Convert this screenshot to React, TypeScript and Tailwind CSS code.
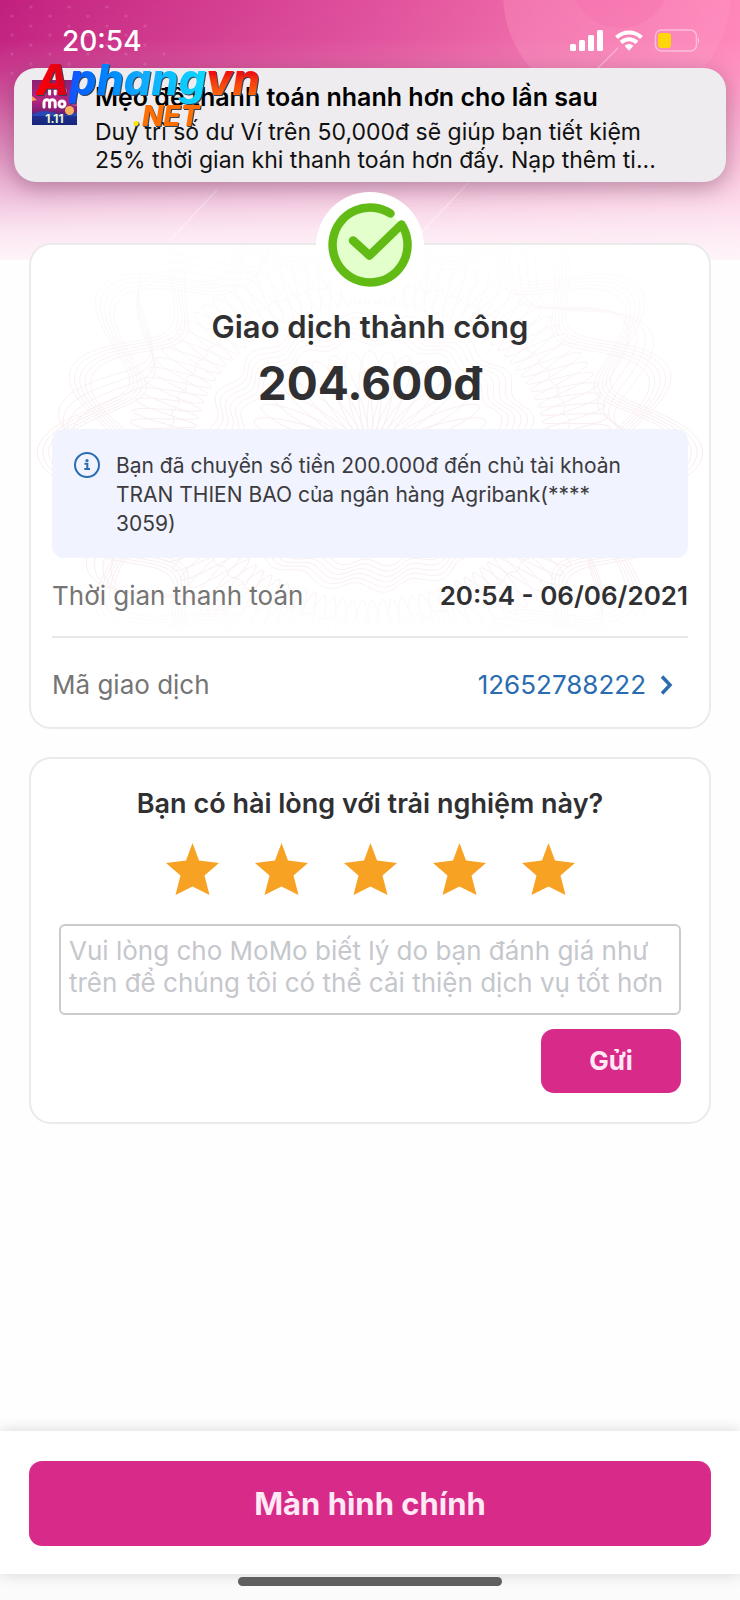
import React, { useState } from "react";

type Point = [number, number];

function toPath(points: Point[]): string {
  return "M" + points.map(([x, y]) => `${x.toFixed(1)} ${y.toFixed(1)}`).join("L") + "Z";
}

/** Closed wavy ring around the centre of the guilloche pattern. */
function ring(rx: number, ry: number, waves: number, depth: number, phase: number): string {
  const points: Point[] = [];
  for (let i = 0; i < 480; i++) {
    const t = (i / 480) * Math.PI * 2;
    const k = 1 + depth * Math.sin(waves * t + phase);
    points.push([340 + rx * k * Math.cos(t), 208 + ry * k * Math.sin(t)]);
  }
  return toPath(points);
}

const GUILLOCHE: string[] = [
  ...Array.from({ length: 5 }, (_, i) => ring(294 - i * 5, 250 - i * 5, 10, 0.135, Math.PI / 2)),
  ...Array.from({ length: 5 }, (_, i) => ring(282 - i * 5, 240 - i * 5, 10, 0.12, -Math.PI / 2)),
  ...Array.from({ length: 4 }, (_, i) => ring(282 - i * 5, 240 - i * 5, 10, 0.12, i * 0.25)),
  ...Array.from({ length: 3 }, (_, i) => ring(210, 176, 38, 0.16, i * 2.09)),
  ring(202, 170, 60, 0.01, 0),
  ...Array.from({ length: 6 }, (_, i) => ring(164 - i * 6, 136 - i * 5, 18, 0.035, i * 0.2)),
  ...Array.from({ length: 4 }, (_, i) => ring(72, 60, 10, 0.7, i * 1.57)),
];

function Guilloche() {
  return (
    <svg
      aria-hidden="true"
      viewBox="0 0 680 390"
      className="pointer-events-none absolute inset-x-0 top-0 w-full"
    >
      <defs>
        <linearGradient id="guillocheFade" x1="0" y1="0" x2="0" y2="1">
          <stop offset="0" stopColor="#fff" stopOpacity="0.1" />
          <stop offset="0.5" stopColor="#fff" stopOpacity="1" />
          <stop offset="0.85" stopColor="#fff" stopOpacity="0.9" />
          <stop offset="1" stopColor="#fff" stopOpacity="0" />
        </linearGradient>
        <mask id="guillocheMask">
          <rect width="680" height="390" fill="url(#guillocheFade)" />
        </mask>
      </defs>
      <g mask="url(#guillocheMask)" fill="none" stroke="#f8ecee" strokeWidth="1">
        {GUILLOCHE.map((d, i) => (
          <path key={i} d={d} />
        ))}
      </g>
    </svg>
  );
}

function HeroBackground() {
  return (
    <div
      aria-hidden="true"
      className="absolute inset-x-0 top-0 h-[260px] overflow-hidden bg-linear-to-r from-[#c21f7f] via-[#e0509c] to-[#ff86b8]"
    >
      <svg viewBox="0 0 740 260" preserveAspectRatio="none" className="size-full">
        <defs>
          <linearGradient id="heroFade" x1="0" y1="0" x2="0" y2="1">
            <stop offset="0" stopColor="#fff" stopOpacity="0" />
            <stop offset="0.15" stopColor="#fff" stopOpacity="0.02" />
            <stop offset="0.27" stopColor="#f6e4f0" stopOpacity="0.14" />
            <stop offset="0.68" stopColor="#fbeaf4" stopOpacity="0.7" />
            <stop offset="0.88" stopColor="#fdeef6" stopOpacity="0.95" />
            <stop offset="1" stopColor="#fff5fa" stopOpacity="1" />
          </linearGradient>
          <pattern id="heroDots" width="38" height="19" patternUnits="userSpaceOnUse">
            <circle cx="12" cy="16" r="1.6" fill="#fff" fillOpacity="0.13" />
            <circle cx="31" cy="7" r="1.6" fill="#fff" fillOpacity="0.13" />
          </pattern>
        </defs>
        <path d="M0 0H130L175 60V80H0Z" fill="url(#heroDots)" />
        <circle cx="617" cy="-6" r="114" fill="#ff9cc8" fillOpacity="0.3" />
        <circle cx="620" cy="-22" r="50" fill="#f46aac" fillOpacity="0.3" />
        <rect width="740" height="260" fill="url(#heroFade)" />
        <g stroke="#fff" strokeWidth="1.5" strokeOpacity="0.35">
          <path d="M618 48L596 70" />
          <path d="M468 183L422 232" />
          <path d="M217 190L170 240" />
        </g>
      </svg>
    </div>
  );
}

function StatusBar() {
  return (
    <div className="relative flex h-[68px] items-center justify-between pt-[13px] pr-[41px] pl-[62px] text-white">
      <span className="text-[28px] leading-8 font-medium">20:54</span>
      <svg role="img" aria-label="Signal, Wi-Fi, battery" width="132" height="26" viewBox="0 0 132 26">
        <g fill="#fff">
          <rect x="3" y="16" width="6" height="7" rx="1.5" />
          <rect x="12" y="12" width="6" height="11" rx="1.5" />
          <rect x="21" y="7" width="6" height="16" rx="1.5" />
          <rect x="30" y="2" width="6" height="21" rx="1.5" />
        </g>
        <g fill="none" stroke="#fff" strokeWidth="4">
          <path d="M49.500 9.500A18 18 0 0 1 74.500 9.500" />
          <path d="M54 14.500A11.500 11.500 0 0 1 70 14.500" />
        </g>
        <path d="M57.500 17.800A6.500 6.500 0 0 1 66.500 17.800L62 22.800Z" fill="#fff" />
        <rect x="88.500" y="2" width="41" height="21" rx="6" fill="none" stroke="#fff" strokeOpacity="0.45" strokeWidth="1.500" />
        <rect x="91" y="5" width="13" height="15" rx="3" fill="#ffd60a" />
        <path d="M131 9Q133 12.500 131 16Z" fill="#fff" fillOpacity="0.6" />
      </svg>
    </div>
  );
}

function MomoIcon() {
  return (
    <svg role="img" aria-label="MoMo" viewBox="0 0 45 45" className="size-[45px] shrink-0">
      <defs>
        <linearGradient id="momoBg" x1="0" y1="0" x2="0" y2="1">
          <stop offset="0" stopColor="#8d2070" />
          <stop offset="0.45" stopColor="#b5257e" />
          <stop offset="0.7" stopColor="#7c1f74" />
          <stop offset="0.8" stopColor="#1f2f8f" />
          <stop offset="1" stopColor="#16257a" />
        </linearGradient>
      </defs>
      <rect width="45" height="45" fill="url(#momoBg)" />
      <path d="M0 16L5 20L0 21Z" fill="#f6a15a" />
      <path d="M45 20L39 25L45 26Z" fill="#e2558c" />
      <path d="M0 35Q10 28 22 33T45 32V36H0Z" fill="#2b49b4" />
      <circle cx="37.500" cy="30.500" r="4.500" fill="#f9b35c" />
      <g fill="none" stroke="#fff" strokeWidth="3" strokeLinecap="round">
        <path d="M12 14V9.500a2.800 2.800 0 0 1 5.600 0V14M17.600 9.500a2.800 2.800 0 0 1 5.600 0V14" />
        <circle cx="30" cy="11" r="3" />
        <path d="M12 27V22.500a2.800 2.800 0 0 1 5.600 0V27M17.600 22.500a2.800 2.800 0 0 1 5.600 0V27" />
        <circle cx="30" cy="24" r="3" />
      </g>
      <text x="22.500" y="42.500" textAnchor="middle" fill="#e9f6d0" fontSize="12" fontWeight="700" fontFamily="Inter, sans-serif">
        1.11
      </text>
    </svg>
  );
}

function Watermark() {
  return (
    <div className="pointer-events-none absolute top-[-14px] left-[22px] font-extrabold italic drop-shadow-[1px_1px_0px_#334155]">
      <div className="flex text-[43px] leading-[50px]">
        <span className="bg-linear-to-r from-[#f00] to-[#d80018] bg-clip-text text-transparent">A</span>
        <span className="bg-linear-to-r from-[#1450ff] via-[#12a8ff] to-[#0fd8ff] bg-clip-text text-transparent">phang</span>
        <span className="bg-linear-to-b from-[#f01010] from-40% to-[#ff7a00] bg-clip-text pr-1 text-transparent">vn</span>
      </div>
      <div className="mt-[-2px] ml-24 text-[28px] leading-7 text-[#ff6f00]">
        <span className="text-[#ffe600]">.</span>NET
      </div>
    </div>
  );
}

function NotificationBanner() {
  return (
    <section
      aria-label="Thông báo"
      className="relative mx-[14px] flex h-[114px] gap-[18px] rounded-[22px] bg-[#eeecee] pt-3 pr-[60px] pl-[18px] text-black shadow-[0_6px_22px_rgba(90,40,70,0.4)]"
    >
      <MomoIcon />
      <div className="min-w-0 flex-1 pt-0.5">
        <h2 className="text-[25px] leading-[30px] font-semibold whitespace-nowrap">Mẹo để thanh toán nhanh hơn cho lần sau</h2>
        <p className="mt-1.5 text-[23px] leading-7 whitespace-nowrap text-[#111]">
          Duy trì số dư Ví trên 50,000đ sẽ giúp bạn tiết kiệm
          <br />
          25% thời gian khi thanh toán hơn đấy. Nạp thêm ti...
        </p>
      </div>
      <Watermark />
    </section>
  );
}

function SuccessBadge() {
  return (
    <div className="absolute top-[-53px] left-1/2 size-[108px] -translate-x-1/2 rounded-full bg-white">
      <svg role="img" aria-label="Thành công" viewBox="0 0 108 108" className="size-full">
        <circle cx="53.500" cy="53" r="37" fill="#e2ffcc" />
        <path
          d="M37 48.500L53.500 63.500L85.500 32.500A37.500 37.500 0 1 1 74.500 21.500"
          fill="none"
          stroke="#62bb14"
          strokeWidth="8.500"
          strokeLinecap="round"
          strokeLinejoin="round"
        />
      </svg>
    </div>
  );
}

function InfoIcon() {
  return (
    <svg aria-hidden="true" viewBox="0 0 28 28" className="size-7 shrink-0">
      <circle cx="14" cy="14" r="12" fill="none" stroke="#2b6cb0" strokeWidth="2" />
      <circle cx="14" cy="9.500" r="1.600" fill="#2b6cb0" />
      <path d="M11.500 12.800H14.300V18M11.300 18H17" fill="none" stroke="#2b6cb0" strokeWidth="2" />
    </svg>
  );
}

function TransactionCard() {
  return (
    <section className="relative mt-[61px] rounded-[22px] border-2 border-[#eaeaea] bg-white px-[21px] pt-[62px] pb-[26px]">
      <Guilloche />
      <SuccessBadge />
      <div className="relative">
        <h1 className="text-center text-[31px] leading-10 font-semibold text-[#303033]">Giao dịch thành công</h1>
        <p className="mt-2 text-center text-[46px] leading-[56px] font-bold text-[#303033]">204.600đ</p>
        <div className="mt-[18px] flex gap-[15px] rounded-xl bg-[#f1f3fe] px-[21px] pt-[22px] pb-5">
          <InfoIcon />
          <p className="text-[21px] leading-[29px] whitespace-nowrap text-[#3b3b40]">
            Bạn đã chuyển số tiền 200.000đ đến chủ tài khoản
            <br />
            TRAN THIEN BAO của ngân hàng Agribank(****
            <br />
            3059)
          </p>
        </div>
        <dl className="text-[26px] leading-8">
          <div className="flex justify-between gap-4 border-b-2 border-[#e8e8e8] pt-[22px] pb-6">
            <dt className="text-[#757575]">Thời gian thanh toán</dt>
            <dd className="font-semibold text-[#303033]">20:54 - 06/06/2021</dd>
          </div>
          <div className="flex justify-between gap-4 pt-[31px]">
            <dt className="text-[#757575]">Mã giao dịch</dt>
            <dd>
              <a href="#transaction" className="flex items-center gap-3 pr-3 text-[#2b6cb0]">
                12652788222
                <svg aria-hidden="true" width="18" height="24" viewBox="0 0 18 24" fill="none" stroke="#2b6cb0" strokeWidth="3.500">
                  <path d="M4 3.500L12 12L4 20.500" />
                </svg>
              </a>
            </dd>
          </div>
        </dl>
      </div>
    </section>
  );
}

function FeedbackCard() {
  const [rating, setRating] = useState(5);
  return (
    <section className="mt-7 rounded-[22px] border-2 border-[#eaeaea] bg-white px-7 pt-[29px] pb-[29px]">
      <h2 className="text-center text-[27px] leading-8 font-semibold text-[#303033]">
        <label htmlFor="feedback">Bạn có hài lòng với trải nghiệm này?</label>
      </h2>
      <div className="mt-[22px] flex justify-center gap-9">
        {[1, 2, 3, 4, 5].map((value) => (
          <button key={value} type="button" aria-label={`${value} sao`} aria-pressed={rating === value} onClick={() => setRating(value)}>
            <svg viewBox="0 0 53 53" className="h-[54px] w-[53px]">
              <path
                d="M26.500 0.500L33 18L53 20.500L38.500 33L43.500 52.500L26.500 44L9.500 52.500L14.500 33L0 20.500L20 18Z"
                fill={value <= rating ? "#f7a223" : "#dddddd"}
              />
            </svg>
          </button>
        ))}
      </div>
      <textarea
        id="feedback"
        rows={2}
        placeholder="Vui lòng cho MoMo biết lý do bạn đánh giá như trên để chúng tôi có thể cải thiện dịch vụ tốt hơn"
        className="mt-7 block h-[91px] w-full resize-none overflow-hidden rounded-md border-2 border-[#c9cbcd] bg-white px-2 pt-[9px] text-[26px] leading-8 outline-none placeholder:text-[#c5c7cd]"
      />
      <div className="mt-[14px] flex justify-end">
        <button type="button" className="h-16 w-[140px] rounded-[13px] bg-[#d82a88] text-[26px] leading-8 font-bold text-[#ffe9f5]">
          Gửi
        </button>
      </div>
    </section>
  );
}

function BottomBar() {
  return (
    <footer className="relative bg-[#fbfbfb]">
      <div className="bg-white px-[29px] pt-[30px] pb-7 shadow-[0_0_14px_rgba(0,0,0,0.16)]">
        <button type="button" className="h-[85px] w-full rounded-[13px] bg-[#d82a88] text-[31px] leading-9 font-bold text-[#ffe9f5]">
          Màn hình chính
        </button>
      </div>
      <div className="relative flex justify-center pt-[3px] pb-[14px]">
        <div className="h-[9px] w-[264px] rounded-full bg-[#5f5f5f]" />
      </div>
    </footer>
  );
}

export default function App() {
  return (
    <div className="relative flex min-h-screen flex-col bg-[#fefefe] font-[Inter,'Liberation_Sans',sans-serif]">
      <HeroBackground />
      <StatusBar />
      <NotificationBanner />
      <main className="relative flex-1 px-[29px]">
        <TransactionCard />
        <FeedbackCard />
      </main>
      <BottomBar />
    </div>
  );
}
